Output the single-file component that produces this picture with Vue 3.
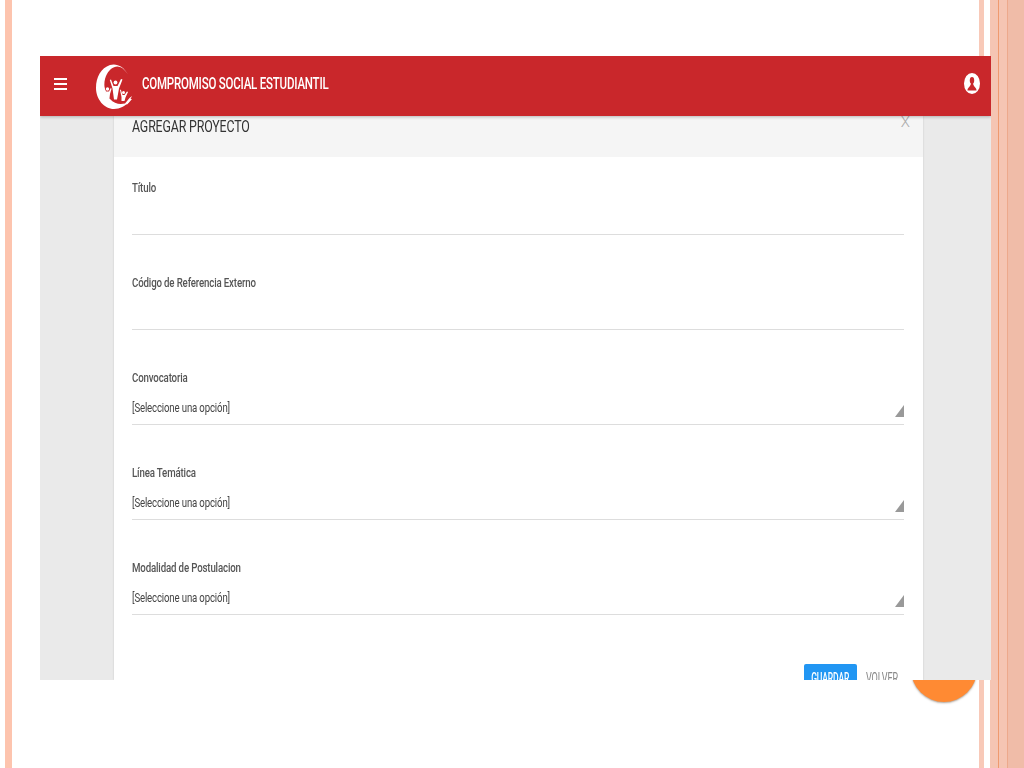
<script setup>
const fields = [
  { label: 'Título', value: '' },
  { label: 'Código de Referencia Externo', value: '' },
  { label: 'Convocatoria', value: '[Seleccione una opción]', select: true },
  { label: 'Línea Temática', value: '[Seleccione una opción]', select: true },
  { label: 'Modalidad de Postulacion', value: '[Seleccione una opción]', select: true },
]
</script>

<template>
  <div class="slide">
    <div class="orb"></div>
    <div class="window">
      <header class="bar">
        <div class="burger"><i></i><i></i><i></i></div>
        <svg class="logo" viewBox="0 0 36 50" width="36" height="50">
          <path d="M32 14C28 5 20 2 14 4C5 7 0 16 0 27C0 38 8 48 18 48C24 48 29 45 33 41C27 44 19 44 14 38C8 32 7 22 10 15C13 8 19 4 24 6C27 7 30 10 32 14Z" fill="#fff"/>
          <g fill="#fff">
            <circle cx="19.500" cy="21.500" r="1.900"/>
            <path d="M15 18.500L17.500 25H21.500L25 18L26.500 18.500L23 27.500L21 38.500H18L16.500 27.500L13.800 19Z"/>
            <circle cx="11.500" cy="28" r="1.700"/>
            <path d="M7.500 24.500L10 30.500H13L15 26.500L15.500 28L14 33L13.500 37H10.500L10 33L6.500 25.500Z"/>
            <circle cx="27.500" cy="31.500" r="1.500"/>
            <path d="M24.800 28.500L26.500 34H28.500L31 30.500L32 31L29.500 36.500L28.500 40H25.500L25.500 36L24 29Z"/>
            <path d="M29 42.500L33.500 37L36 35L34.500 38L36 38L33 41.500L31 43.500Z"/>
          </g>
        </svg>
        <span class="brand">COMPROMISO SOCIAL ESTUDIANTIL</span>
        <svg class="user" viewBox="0 0 16 21" width="16" height="21">
          <ellipse cx="8" cy="10.500" rx="8" ry="10.500" fill="#fff"/>
          <ellipse cx="8" cy="7.500" rx="2.200" ry="3.400" fill="#c9272b"/>
          <path d="M3.500 17.500C3.500 14 6.800 14 7 10H9C9.200 14 12.500 14 12.500 17.500Z" fill="#c9272b"/>
        </svg>
      </header>
      <main class="content">
        <section class="modal">
          <div class="modal-head">
            <h2>AGREGAR PROYECTO</h2>
            <span class="close">X</span>
          </div>
          <form class="modal-body">
            <div v-for="f in fields" :key="f.label" class="field">
              <label>{{ f.label }}</label>
              <div class="input">
                <span v-if="f.value">{{ f.value }}</span>
                <b v-if="f.select" class="arrow"></b>
              </div>
            </div>
            <div class="actions">
              <button type="button" class="save"><span>GUARDAR</span></button>
              <button type="button" class="back"><span>VOLVER</span></button>
            </div>
          </form>
        </section>
      </main>
    </div>
  </div>
</template>

<style>
html, body { margin: 0; background: #fff; }
</style>

<style scoped>
.slide {
  position: relative;
  width: 1024px;
  height: 768px;
  overflow: hidden;
  box-sizing: border-box;
  padding: 56px 33px 0 40px;
  font-family: Roboto, "Liberation Sans", sans-serif;
  background:
    linear-gradient(90deg,
      #fff 0 5px, #fdc4ae 5px 12px, #fff 12px 979px,
      #f8c9b8 979px 984px, #fff 984px 990px,
      #f5c5b3 990px 998px, #ef9a6f 998px 999px,
      #f5c5b3 999px 1007px, #eda98c 1007px 1008px, #f0bca8 1008px 1024px);
}
.orb {
  position: absolute;
  left: 911px;
  top: 636px;
  width: 66px;
  height: 66px;
  border-radius: 50%;
  background: #ff8a33;
  box-shadow: 0 1px 2px rgba(90, 70, 50, .5);
}
.window {
  position: relative;
  height: 624px;
  background: #eaeaea;
  display: flex;
  flex-direction: column;
  overflow: hidden;
}
.bar {
  height: 60px;
  flex: none;
  background: #c9272b;
  display: flex;
  align-items: center;
  color: #fff;
  padding: 0 11px 0 14px;
  box-shadow: 0 1px 3px rgba(0, 0, 0, .25);
  position: relative;
  z-index: 1;
}
.burger { display: flex; flex-direction: column; gap: 3px; width: 13px; margin-top: -5px; flex: none; }
.burger i { display: block; height: 2px; background: #fff; }
.logo { margin: 0 0 0 29px; flex: none; }
.brand {
  margin-left: 10px;
  margin-top: -5px;
  font-size: 16.4px;
  font-weight: 500;
  letter-spacing: -.3px;
  white-space: nowrap;
  transform: scaleX(.702);
  transform-origin: left center;
  filter: blur(.4px);
}
.user { margin-left: auto; margin-top: -5px; flex: none; }
.content { flex: 1; padding: 0 68px 0 74px; min-height: 0; }
.modal { background: #fff; height: 100%; box-shadow: 0 0 2px rgba(0, 0, 0, .15); }
.modal-head {
  height: 41px;
  box-sizing: border-box;
  background: #f5f5f5;
  padding: 1px 13px 0 18px;
  display: flex;
  justify-content: space-between;
  color: #333;
}
.modal-head h2 {
  margin: 0;
  font-size: 16.500px;
  line-height: 20px;
  font-weight: 400;
  letter-spacing: -.2px;
  transform: scaleX(.75);
  transform-origin: left center;
  filter: blur(.4px);
}
.close { font-size: 15px; line-height: 11px; color: #aaa; font-weight: 300; }
.modal-body { padding: 23px 19px 0 18px; }
.field { height: 95px; color: #555; }
.field label {
  display: block;
  font-size: 12.500px;
  font-weight: 500;
  line-height: 16px;
  letter-spacing: -.2px;
  white-space: nowrap;
  transform: scaleX(.775);
  transform-origin: left center;
  filter: blur(.4px);
}
.input {
  height: 39px;
  border-bottom: 1px solid #ddd;
  box-sizing: border-box;
  padding-top: 14px;
  font-size: 13px;
  line-height: 16px;
  letter-spacing: -.2px;
  color: #444;
  position: relative;
}
.input span {
  display: inline-block;
  white-space: nowrap;
  transform: scaleX(.74);
  transform-origin: left center;
  filter: blur(.4px);
}
.arrow {
  position: absolute;
  right: 0;
  bottom: 7px;
  width: 0;
  height: 0;
  border-left: 9px solid transparent;
  border-bottom: 12px solid #999;
}
.actions { display: flex; justify-content: flex-end; margin-top: 9px; padding-right: 7px; gap: 9px; }
.actions button {
  border: 0;
  height: 30px;
  padding: 0 0 2px;
  display: flex;
  align-items: center;
  font: 500 14px Roboto, sans-serif;
  letter-spacing: -.2px;
  white-space: nowrap;
}
.actions span { display: inline-block; filter: blur(.4px); }
.save { background: #2196f3; color: #fff; width: 53px; justify-content: center; border-radius: 2px 2px 0 0; }
.save span { transform: scaleX(.61); }
.back { background: transparent; color: #888; width: 31px; justify-content: flex-start; }
.back span { font-weight: 400; transform: scaleX(.65); transform-origin: left center; }
</style>
